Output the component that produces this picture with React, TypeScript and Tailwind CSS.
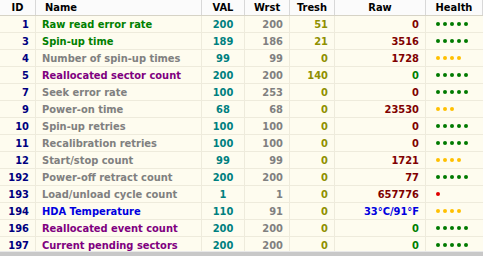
import React from 'react';

type Row = {
  id: number;
  name: string;
  nameColor: string;
  val: number;
  wrst: number;
  tresh: number;
  raw: string;
  rawColor: string;
  dots: number;
  dotColor: string;
};

const GREEN = 'text-[#008000]';
const GRAY = 'text-[#808080]';
const PURPLE = 'text-[#800080]';
const BLUE = 'text-[#0000e0]';
const DARKRED = 'text-[#800000]';

const ROWS: Row[] = [
  { id: 1, name: 'Raw read error rate', nameColor: GREEN, val: 200, wrst: 200, tresh: 51, raw: '0', rawColor: DARKRED, dots: 5, dotColor: 'bg-[#007a00]' },
  { id: 3, name: 'Spin-up time', nameColor: GREEN, val: 189, wrst: 186, tresh: 21, raw: '3516', rawColor: DARKRED, dots: 5, dotColor: 'bg-[#007a00]' },
  { id: 4, name: 'Number of spin-up times', nameColor: GRAY, val: 99, wrst: 99, tresh: 0, raw: '1728', rawColor: DARKRED, dots: 4, dotColor: 'bg-[#ffc000]' },
  { id: 5, name: 'Reallocated sector count', nameColor: PURPLE, val: 200, wrst: 200, tresh: 140, raw: '0', rawColor: GREEN, dots: 5, dotColor: 'bg-[#007a00]' },
  { id: 7, name: 'Seek error rate', nameColor: GRAY, val: 100, wrst: 253, tresh: 0, raw: '0', rawColor: DARKRED, dots: 5, dotColor: 'bg-[#007a00]' },
  { id: 9, name: 'Power-on time', nameColor: GRAY, val: 68, wrst: 68, tresh: 0, raw: '23530', rawColor: DARKRED, dots: 3, dotColor: 'bg-[#ffc000]' },
  { id: 10, name: 'Spin-up retries', nameColor: GRAY, val: 100, wrst: 100, tresh: 0, raw: '0', rawColor: DARKRED, dots: 5, dotColor: 'bg-[#007a00]' },
  { id: 11, name: 'Recalibration retries', nameColor: GRAY, val: 100, wrst: 100, tresh: 0, raw: '0', rawColor: DARKRED, dots: 5, dotColor: 'bg-[#007a00]' },
  { id: 12, name: 'Start/stop count', nameColor: GRAY, val: 99, wrst: 99, tresh: 0, raw: '1721', rawColor: DARKRED, dots: 4, dotColor: 'bg-[#ffc000]' },
  { id: 192, name: 'Power-off retract count', nameColor: GRAY, val: 200, wrst: 200, tresh: 0, raw: '77', rawColor: DARKRED, dots: 5, dotColor: 'bg-[#007a00]' },
  { id: 193, name: 'Load/unload cycle count', nameColor: GRAY, val: 1, wrst: 1, tresh: 0, raw: '657776', rawColor: DARKRED, dots: 1, dotColor: 'bg-[#e00000]' },
  { id: 194, name: 'HDA Temperature', nameColor: BLUE, val: 110, wrst: 91, tresh: 0, raw: '33°C/91°F', rawColor: BLUE, dots: 4, dotColor: 'bg-[#ffc000]' },
  { id: 196, name: 'Reallocated event count', nameColor: PURPLE, val: 200, wrst: 200, tresh: 0, raw: '0', rawColor: GREEN, dots: 5, dotColor: 'bg-[#007a00]' },
  { id: 197, name: 'Current pending sectors', nameColor: PURPLE, val: 200, wrst: 200, tresh: 0, raw: '0', rawColor: GREEN, dots: 5, dotColor: 'bg-[#007a00]' },
];

const COLS = 'grid grid-cols-[36px_166px_43px_45px_45px_91px_57px]';

export default function App() {
  return (
    <div className="w-[483px] h-[256px] flex flex-col overflow-hidden bg-[#fefcef] font-['Tahoma','DejaVu_Sans',sans-serif] font-stretch-condensed text-[11px] font-bold leading-none">
      <div className="flex-1 overflow-hidden">
        <div className={`${COLS} h-[16px] bg-[#fbfbfb] border-b border-[#d6d3c6] text-black`}>
          <div className="flex items-center justify-center border-r border-[#d8d8d8]">ID</div>
          <div className="flex items-center pl-[9px] border-r border-[#d8d8d8]">Name</div>
          <div className="flex items-center justify-center border-r border-[#d8d8d8]">VAL</div>
          <div className="flex items-center justify-center border-r border-[#d8d8d8]">Wrst</div>
          <div className="flex items-center justify-center border-r border-[#d8d8d8]">Tresh</div>
          <div className="flex items-center justify-center border-r border-[#d8d8d8]">Raw</div>
          <div className="flex items-center justify-center border-r border-[#d8d8d8]">Health</div>
        </div>
        {ROWS.map((r) => (
          <div key={r.id} className={`${COLS} h-[17px] border-b border-[#eeebdc]`}>
            <div className="flex items-center justify-end pr-[6px] border-r border-[#eeebdc] text-[#000080]">{r.id}</div>
            <div className={`flex items-center pl-[6px] border-r border-[#eeebdc] whitespace-nowrap ${r.nameColor}`}>{r.name}</div>
            <div className="flex items-center justify-center border-r border-[#eeebdc] text-[#008080]">{r.val}</div>
            <div className="flex items-center justify-end pr-[6px] border-r border-[#eeebdc] text-[#808080]">{r.wrst}</div>
            <div className="flex items-center justify-end pr-[6px] border-r border-[#eeebdc] text-[#909000]">{r.tresh}</div>
            <div className={`flex items-center justify-end pr-[6px] border-r border-[#eeebdc] ${r.rawColor}`}>{r.raw}</div>
            <div className="flex items-center pl-[10px] gap-[3px]">
              {Array.from({ length: r.dots }).map((_, i) => (
                <span key={i} className={`w-[4px] h-[4px] rounded-full ${r.dotColor}`} />
              ))}
            </div>
          </div>
        ))}
      </div>
      <div className="h-[5px] bg-[#c8c8c8] border-t border-[#e8e8e8]" />
    </div>
  );
}
